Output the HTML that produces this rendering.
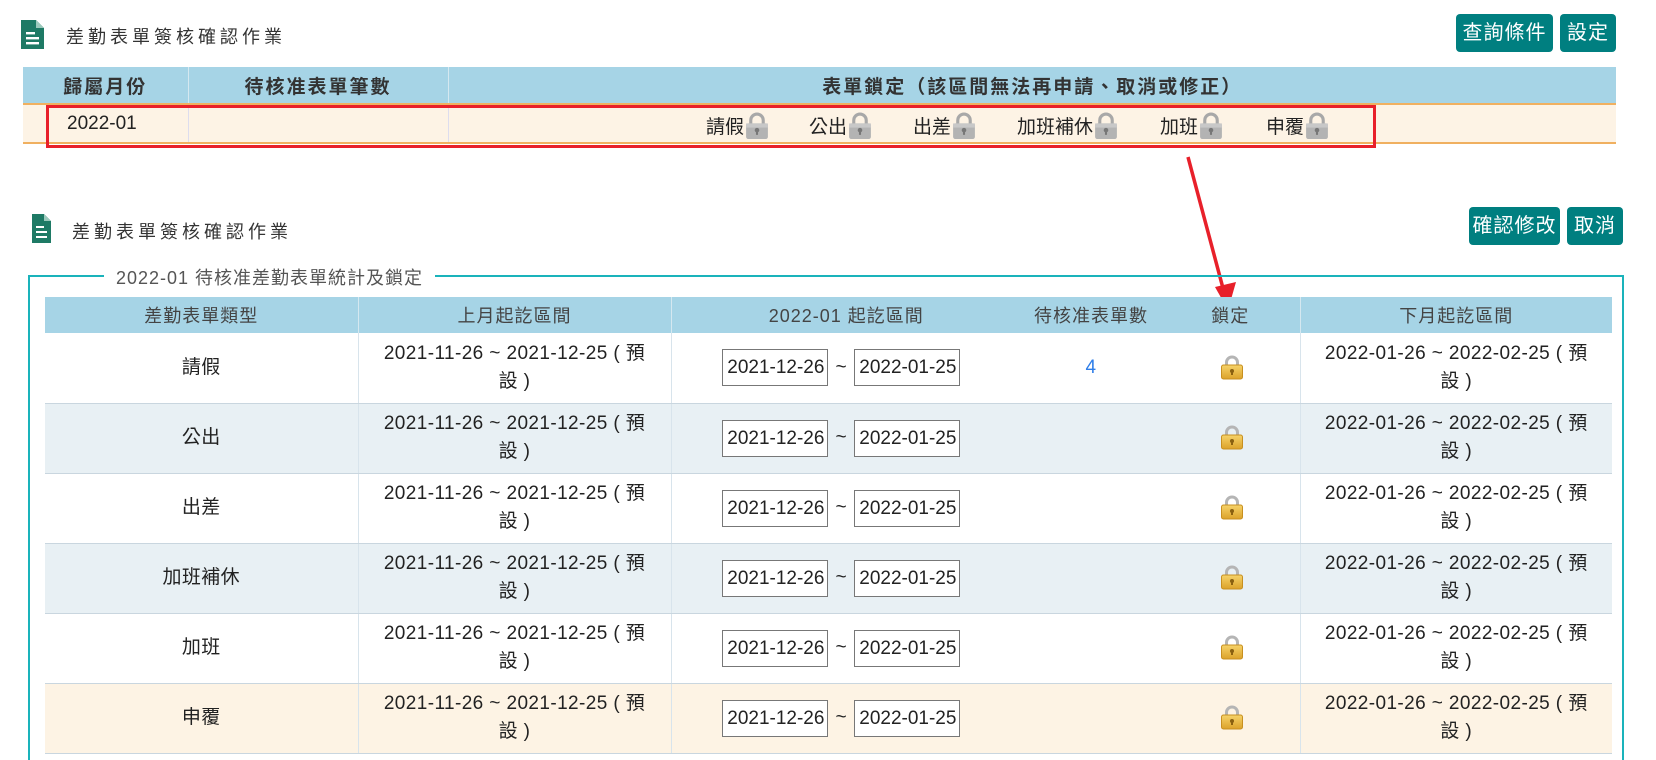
<!DOCTYPE html>
<html style="width:1656px;height:760px;overflow:hidden"><head><meta charset="utf-8">
<style>
*{box-sizing:border-box;margin:0;padding:0}
body{width:1656px;height:760px;background:#fff;font-family:"Liberation Sans","Noto Sans CJK TC",sans-serif;color:#222;position:relative;overflow:hidden;font-size:18px}
.abs{position:absolute}
.title{font-size:18px;letter-spacing:4px;color:#333}
.btn{position:absolute;background:#007f80;color:#fff;font-size:20px;border-radius:4px;text-align:center;line-height:38px;letter-spacing:1px}
table{border-collapse:collapse;position:absolute}
.t1 th{background:#a6d4e6;height:37px;font-weight:bold;color:#333;font-size:19px;border-left:1px solid #d5e8f0;letter-spacing:2px}
.t1 td{background:#fdf3e5;height:39px;border-left:1px solid #dde;border-top:2px solid #f0b060;border-bottom:2px solid #f0b060;font-size:19px}
.t2 th{background:#a6d4e6;height:36px;font-weight:normal;color:#444;font-size:18px;border-left:1px solid #d5e8f0;letter-spacing:1px;white-space:nowrap}
.t2 td{height:70px;text-align:center;border-left:1px solid #d8e4ec;border-bottom:1px solid #c9d6df;line-height:28px;color:#222;font-size:19px;letter-spacing:0.4px}
.t2 td.nb,.t2 th.nb{border-left:none}
.t2 tr.g td{background:#e8f0f4}
.t2 tr.o td{background:#fdf3e4}
.inp{display:inline-block;width:106px;height:37px;border:1px solid #777;background:#fff;overflow:hidden;white-space:nowrap;text-align:left;padding:6px 4px;line-height:23px;vertical-align:middle;font-size:19px;letter-spacing:0}
.tl{display:inline-block;width:26px;text-align:center}
.lk{display:inline-flex;align-items:center;position:absolute;top:6px;font-size:19px}
</style></head><body>

<svg class="abs" style="left:21px;top:20px" width="23" height="29" viewBox="0 0 23 29"><path d="M0 0H15L23 8V29H0Z" fill="#1e7a65"/><path d="M15 0V8H23" fill="#9cc9bc"/><rect x="5" y="12" width="9" height="2.4" fill="#fff"/><rect x="5" y="17" width="13" height="2.4" fill="#fff"/><rect x="5" y="22" width="13" height="2.4" fill="#fff"/></svg>
<div class="abs title" style="left:66px;top:23px">差勤表單簽核確認作業</div>
<div class="btn" style="left:1456px;top:14px;width:97px">查詢條件</div>
<div class="btn" style="left:1560px;top:14px;width:56px">設定</div>

<table class="t1" style="left:23px;top:67px;width:1593px">
<tr><th style="width:165px;border-left:none">歸屬月份</th><th style="width:260px">待核准表單筆數</th><th>表單鎖定（該區間無法再申請、取消或修正）</th></tr>
<tr><td style="border-left:none;padding-left:44px">2022-01</td><td></td><td></td></tr>
</table>

<div class="abs" style="left:0;top:106px;width:1656px;height:40px">
<span class="lk" style="left:706px">請假<svg width="26" height="27" viewBox="0 0 25 26"><path d="M6.5 12V8a6 6 0 0 1 12 0v4" fill="none" stroke="#a8a8a8" stroke-width="3"/><rect x="2" y="11" width="21" height="15" rx="2" fill="#b3b3b3"/><rect x="2" y="11" width="21" height="4" fill="#c8c8c8"/><circle cx="12.5" cy="17.5" r="2.2" fill="#777"/><rect x="11.5" y="18" width="2" height="4" fill="#777"/></svg></span>
<span class="lk" style="left:809px">公出<svg width="26" height="27" viewBox="0 0 25 26"><path d="M6.5 12V8a6 6 0 0 1 12 0v4" fill="none" stroke="#a8a8a8" stroke-width="3"/><rect x="2" y="11" width="21" height="15" rx="2" fill="#b3b3b3"/><rect x="2" y="11" width="21" height="4" fill="#c8c8c8"/><circle cx="12.5" cy="17.5" r="2.2" fill="#777"/><rect x="11.5" y="18" width="2" height="4" fill="#777"/></svg></span>
<span class="lk" style="left:913px">出差<svg width="26" height="27" viewBox="0 0 25 26"><path d="M6.5 12V8a6 6 0 0 1 12 0v4" fill="none" stroke="#a8a8a8" stroke-width="3"/><rect x="2" y="11" width="21" height="15" rx="2" fill="#b3b3b3"/><rect x="2" y="11" width="21" height="4" fill="#c8c8c8"/><circle cx="12.5" cy="17.5" r="2.2" fill="#777"/><rect x="11.5" y="18" width="2" height="4" fill="#777"/></svg></span>
<span class="lk" style="left:1017px">加班補休<svg width="26" height="27" viewBox="0 0 25 26"><path d="M6.5 12V8a6 6 0 0 1 12 0v4" fill="none" stroke="#a8a8a8" stroke-width="3"/><rect x="2" y="11" width="21" height="15" rx="2" fill="#b3b3b3"/><rect x="2" y="11" width="21" height="4" fill="#c8c8c8"/><circle cx="12.5" cy="17.5" r="2.2" fill="#777"/><rect x="11.5" y="18" width="2" height="4" fill="#777"/></svg></span>
<span class="lk" style="left:1160px">加班<svg width="26" height="27" viewBox="0 0 25 26"><path d="M6.5 12V8a6 6 0 0 1 12 0v4" fill="none" stroke="#a8a8a8" stroke-width="3"/><rect x="2" y="11" width="21" height="15" rx="2" fill="#b3b3b3"/><rect x="2" y="11" width="21" height="4" fill="#c8c8c8"/><circle cx="12.5" cy="17.5" r="2.2" fill="#777"/><rect x="11.5" y="18" width="2" height="4" fill="#777"/></svg></span>
<span class="lk" style="left:1266px">申覆<svg width="26" height="27" viewBox="0 0 25 26"><path d="M6.5 12V8a6 6 0 0 1 12 0v4" fill="none" stroke="#a8a8a8" stroke-width="3"/><rect x="2" y="11" width="21" height="15" rx="2" fill="#b3b3b3"/><rect x="2" y="11" width="21" height="4" fill="#c8c8c8"/><circle cx="12.5" cy="17.5" r="2.2" fill="#777"/><rect x="11.5" y="18" width="2" height="4" fill="#777"/></svg></span>
</div>
<div class="abs" style="left:46px;top:105px;width:1330px;height:43px;border:3px solid #e8202a"></div>

<svg class="abs" style="left:1180px;top:152px" width="70" height="162" viewBox="0 0 70 162"><line x1="8" y1="5" x2="44" y2="140" stroke="#e8202a" stroke-width="3.5"/><path d="M35 135L56 130L48 158Z" fill="#e8202a"/></svg>

<svg class="abs" style="left:32px;top:214px" width="19" height="29" viewBox="0 0 19 29"><path d="M0 0H12L19 7V29H0Z" fill="#1e7a65"/><path d="M12 0V7H19" fill="#9cc9bc"/><rect x="4" y="12" width="8" height="2" fill="#fff"/><rect x="4" y="17" width="11" height="2" fill="#fff"/><rect x="4" y="22" width="11" height="2" fill="#fff"/></svg>
<div class="abs title" style="left:72px;top:218px">差勤表單簽核確認作業</div>
<div class="btn" style="left:1469px;top:207px;width:91px">確認修改</div>
<div class="btn" style="left:1567px;top:207px;width:56px">取消</div>

<div class="abs" style="left:28px;top:275px;width:1596px;height:485px;border:2px solid #1ab3bb;border-bottom:none"></div>
<div class="abs" style="left:104px;top:264px;background:#fff;padding:0 12px;color:#555;font-size:18px;letter-spacing:1px">2022-01 待核准差勤表單統計及鎖定</div>

<table class="t2" style="left:45px;top:297px;width:1567px;table-layout:fixed">
<tr><th style="width:313px;border-left:none">差勤表單類型</th><th style="width:313px">上月起訖區間</th><th style="width:350px">2022-01 起訖區間</th><th class="nb" style="width:140px">待核准表單數</th><th class="nb" style="width:139px">鎖定</th><th>下月起訖區間</th></tr>
<tr><td style="border-left:none">請假</td><td>2021-11-26 ~ 2021-12-25 ( 預<br>設 )</td><td style="padding-right:10px"><span class="inp">2021-12-26</span><span class="tl">~</span><span class="inp">2022-01-25</span></td><td class="nb" style="color:#2f7ee8">4</td><td class="nb" style="padding-left:4px">LOCK</td><td>2022-01-26 ~ 2022-02-25 ( 預<br>設 )</td></tr>
<tr class="g"><td style="border-left:none">公出</td><td>2021-11-26 ~ 2021-12-25 ( 預<br>設 )</td><td style="padding-right:10px"><span class="inp">2021-12-26</span><span class="tl">~</span><span class="inp">2022-01-25</span></td><td class="nb"></td><td class="nb" style="padding-left:4px">LOCK</td><td>2022-01-26 ~ 2022-02-25 ( 預<br>設 )</td></tr>
<tr><td style="border-left:none">出差</td><td>2021-11-26 ~ 2021-12-25 ( 預<br>設 )</td><td style="padding-right:10px"><span class="inp">2021-12-26</span><span class="tl">~</span><span class="inp">2022-01-25</span></td><td class="nb"></td><td class="nb" style="padding-left:4px">LOCK</td><td>2022-01-26 ~ 2022-02-25 ( 預<br>設 )</td></tr>
<tr class="g"><td style="border-left:none">加班補休</td><td>2021-11-26 ~ 2021-12-25 ( 預<br>設 )</td><td style="padding-right:10px"><span class="inp">2021-12-26</span><span class="tl">~</span><span class="inp">2022-01-25</span></td><td class="nb"></td><td class="nb" style="padding-left:4px">LOCK</td><td>2022-01-26 ~ 2022-02-25 ( 預<br>設 )</td></tr>
<tr><td style="border-left:none">加班</td><td>2021-11-26 ~ 2021-12-25 ( 預<br>設 )</td><td style="padding-right:10px"><span class="inp">2021-12-26</span><span class="tl">~</span><span class="inp">2022-01-25</span></td><td class="nb"></td><td class="nb" style="padding-left:4px">LOCK</td><td>2022-01-26 ~ 2022-02-25 ( 預<br>設 )</td></tr>
<tr class="o"><td style="border-left:none">申覆</td><td>2021-11-26 ~ 2021-12-25 ( 預<br>設 )</td><td style="padding-right:10px"><span class="inp">2021-12-26</span><span class="tl">~</span><span class="inp">2022-01-25</span></td><td class="nb"></td><td class="nb" style="padding-left:4px">LOCK</td><td>2022-01-26 ~ 2022-02-25 ( 預<br>設 )</td></tr>
</table>
<script>
var g='<svg width="24" height="25" viewBox="0 0 24 25" style="vertical-align:middle"><path d="M6.5 11V7.5a5.5 5.5 0 0 1 11 0V11" fill="none" stroke="#b5b5b5" stroke-width="3"/><defs><linearGradient id="gg" x1="0" y1="0" x2="0" y2="1"><stop offset="0" stop-color="#f6d36a"/><stop offset="1" stop-color="#dca22a"/></linearGradient></defs><rect x="1.5" y="10" width="21" height="14" rx="2" fill="url(#gg)" stroke="#c89020"/><circle cx="12" cy="16" r="2" fill="#8a6010"/><rect x="11" y="16" width="2" height="4" fill="#8a6010"/></svg>';
document.querySelectorAll('.t2 td').forEach(function(t){if(t.textContent=='LOCK')t.innerHTML=g;});
</script>
</body></html>
